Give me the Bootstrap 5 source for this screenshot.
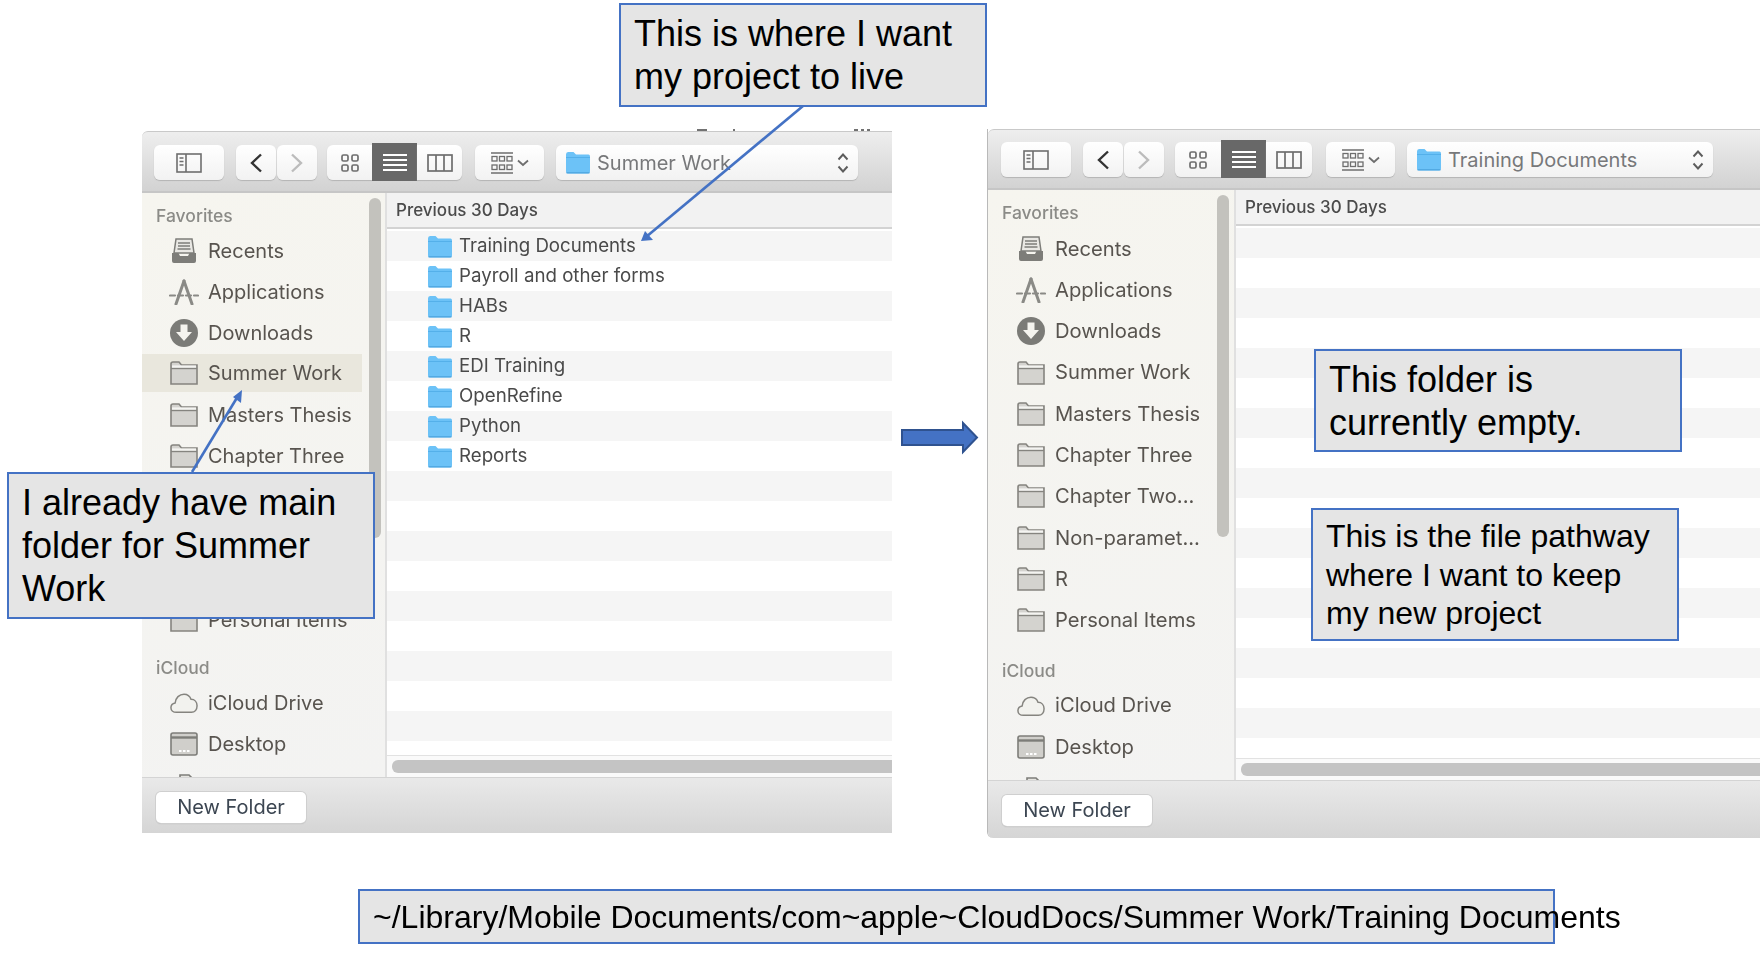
<!DOCTYPE html>
<html lang="en">
<head>
    <meta charset="utf-8">
    <title>Finder project folder notes</title>
    <link href="https://cdn.jsdelivr.net/npm/bootstrap@5.3.0/dist/css/bootstrap.min.css" rel="stylesheet">
    <style>
        html, body { margin: 0; background: #fff; }
        .slide { position: relative; width: 1760px; height: 954px; overflow: hidden; }

        /* finder windows sit freely on the slide */
        .finder { position: absolute; font-family: Inter, "Noto Sans", sans-serif; filter: blur(0.45px); background: #fff; overflow: hidden; }
        .finder-a { left: 142px; top: 131px; width: 750px; height: 702px; --side: 245px; --path: 302px; }
        .finder-b { left: 987px; top: 129px; width: 773px; height: 709px; --side: 248px; --path: 306px; border-left: 1px solid #b9b9b9; border-bottom-left-radius: 6px; }

        .tool-strip { height: 62px; flex: none; padding: 2px 0 0 12px; background: linear-gradient(#eeeeee, #d2d2d2); border-top: 1px solid #c9c9c9; border-bottom: 2px solid #c6c6c6; border-top-left-radius: 6px; }
        .finder-b .tool-strip { height: 61px; padding: 1px 0 0 13px; }
        .tb-btn { height: 35px; padding: 0; border: 0; border-radius: 6px; background: linear-gradient(#ffffff, #f2f2f2); box-shadow: 0 1px 1px #b4b4b4; display: flex; align-items: center; justify-content: center; }
        .tb-side { width: 70px; margin-right: 12px; }
        .tb-nav { width: 40px; }
        .tb-next { margin-left: 1px; margin-right: 10px; }
        .finder-b .tb-next { margin-right: 11px; }
        .tb-views { width: 135px; height: 35px; margin-right: 13px; }
        .finder-b .tb-views { width: 137px; margin-right: 14px; }
        .tb-views .tb-btn { border-radius: 0; flex: 1 1 0; }
        .tb-views .tb-btn:first-child { border-radius: 6px 0 0 6px; }
        .tb-views .tb-btn:last-child { border-radius: 0 6px 6px 0; }
        .tb-views .tb-btn.is-on { background: #686868; height: 38px; margin-top: -2px; box-shadow: none; }
        .tb-group { width: 69px; margin-right: 12px; gap: 4px; }
        .tb-path { width: var(--path); justify-content: flex-start; padding: 0 9px; gap: 6px; font-size: 20px; color: #77787a; }
        .tb-path .path-arrows { margin-left: auto; margin-right: 0; }

        .side-pane { width: var(--side); flex: none; padding-top: 11px; background: linear-gradient(160deg, #f6f5ef, #f3f3f2); border-right: 2px solid #e0e0e0; position: relative; overflow: hidden; }
        .finder-b .side-pane { padding-top: 12px; }
        .side-label { height: 26px; padding-left: 14px; font-size: 17.5px; font-weight: 500; line-height: 24px; color: #8b8b87; }
        .finder-b .side-label { line-height: 22px; }
        .side-label.next-block { margin-top: 16px; }
        .finder-b .side-label.next-block { margin-top: 17px; height: 27px; line-height: 25px; }
        .side-row { height: 41px; padding-left: 28px; gap: 10px; font-size: 20px; color: #58544f; white-space: nowrap; width: 220px; }
        .finder-b .side-row { height: 41.3px; padding-left: 29px; font-size: 20.2px; }
        .side-row.is-here { background: #e9e7dd; height: 38px; margin: 1px 0 2px; }
        .side-thumb { position: absolute; right: 4px; top: 5px; width: 12px; height: 340px; border-radius: 6px; background: #c3c2bd; }
        .finder-b .side-thumb { right: 5px; height: 342px; }
        .ico-wide { margin: 0 -1px; }

        .list-pane { min-width: 0; }
        .list-head { height: 36px; flex: none; padding-left: 9px; background: #f2f2f2; border-bottom: 2px solid #d3d3d3; font-size: 17px; font-weight: 500; line-height: 34px; color: #4b4b4b; }
        .list-rows { margin-top: 2px; background: repeating-linear-gradient(#f5f5f5 0 30px, #fff 30px 60px); min-height: 0; overflow: hidden; }
        .file-row { height: 30px; padding: 1px 0 0 40px; gap: 6px; font-size: 18.7px; color: #4a4a4a; white-space: nowrap; }
        .h-scroll { height: 22px; flex: none; padding: 4px 0 0 5px; background: #fafafa; border-top: 1px solid #e2e2e2; }
        .h-thumb { height: 13px; border-radius: 6px 0 0 6px; background: #c4c4c4; }

        .foot-strip { height: 56px; flex: none; padding: 4px 0 0 14px; background: linear-gradient(#e9e9e9, #d5d5d5); border-top: 1px solid #d4d4d4; }
        .finder-b .foot-strip { height: 58px; padding-top: 2px; }
        .folder-btn { width: 150px; height: 31px; padding: 0; border: 0; border-radius: 5px; background: #fff; box-shadow: 0 0 0 1px #cfcfcf, 0 1px 1px #aaa; font-size: 20px; line-height: 31px; color: #3c4652; }

        /* powerpoint style notes on top of the screenshots */
        .marks { position: absolute; left: 0; top: 0; }
        .note { position: absolute; background: #e5e5e5; border: 2px solid #4472c4; font-family: "Liberation Sans", Arial, sans-serif; font-size: 36px; line-height: 43px; color: #000; padding: 7px 0 0 13px; }
        .note-project { left: 619px; top: 3px; width: 368px; height: 104px; padding-top: 7px; }
        .note-main { left: 7px; top: 472px; width: 368px; height: 147px; }
        .note-empty { left: 1314px; top: 349px; width: 368px; height: 103px; padding-top: 7px; }
        .note-path { left: 1311px; top: 508px; width: 368px; height: 133px; font-size: 32px; line-height: 38.5px; }
        .note-line { left: 358px; top: 889px; width: 1197px; height: 55px; font-size: 32px; line-height: 52px; padding: 0 0 0 13px; white-space: nowrap; }
    </style>
</head>
<body>

<svg class="d-none">
    <symbol id="i-sidebar" viewBox="0 0 26 20"><rect x="1" y="1" width="24" height="18" fill="none" stroke="#6e6e6e" stroke-width="1.6"/><path d="M10 1v18M3.5 5h4M3.5 8.5h4M3.5 12h4" stroke="#6e6e6e" stroke-width="1.6" fill="none"/></symbol>
    <symbol id="i-back" viewBox="0 0 14 20"><path d="M12 1.5 3 10l9 8.5" fill="none" stroke="currentColor" stroke-width="2.4"/></symbol>
    <symbol id="i-next" viewBox="0 0 14 20"><path d="M2 1.5 11 10l-9 8.5" fill="none" stroke="currentColor" stroke-width="2.4"/></symbol>
    <symbol id="i-icons" viewBox="0 0 18 18"><g fill="none" stroke="#6e6e6e" stroke-width="1.7"><rect x="1" y="1" width="6" height="6" rx="1.5"/><rect x="11" y="1" width="6" height="6" rx="1.5"/><rect x="1" y="11" width="6" height="6" rx="1.5"/><rect x="11" y="11" width="6" height="6" rx="1.5"/></g></symbol>
    <symbol id="i-lines" viewBox="0 0 24 18"><path d="M0 2h24M0 7h24M0 12h24M0 17h24" stroke="#fff" stroke-width="2"/></symbol>
    <symbol id="i-cols" viewBox="0 0 26 18"><rect x="1" y="1" width="24" height="16" fill="none" stroke="#6e6e6e" stroke-width="1.7"/><path d="M9 1v16M17 1v16" stroke="#6e6e6e" stroke-width="1.7"/></symbol>
    <symbol id="i-group" viewBox="0 0 22 22"><path d="M0 1h22M0 21h22" stroke="#6e6e6e" stroke-width="1.7"/><g fill="none" stroke="#6e6e6e" stroke-width="1.3"><rect x="1" y="4.5" width="5" height="4.5"/><rect x="8.5" y="4.5" width="5" height="4.5"/><rect x="16" y="4.5" width="5" height="4.5"/><rect x="1" y="13" width="5" height="4.5"/><rect x="8.5" y="13" width="5" height="4.5"/><rect x="16" y="13" width="5" height="4.5"/></g></symbol>
    <symbol id="i-down" viewBox="0 0 12 8"><path d="M1 1.5 6 6l5-4.500" fill="none" stroke="#6e6e6e" stroke-width="1.8"/></symbol>
    <symbol id="i-updown" viewBox="0 0 12 22"><path d="M1.500 7.500 6 2.500l4.500 5M1.500 14.500 6 19.500l4.500-5" fill="none" stroke="#5c5c5c" stroke-width="1.9"/></symbol>
    <symbol id="i-blue" viewBox="0 0 26 23"><path d="M1 3.500Q1 1 3 1h5.500L11 3.500h12.500Q25 3.500 25 5.500v15q0 2-2 2H3q-2 0-2-2z" fill="#6cc2f7"/><path d="M1 6.500h24" stroke="#54b0ea" stroke-width="1"/><path d="M1.500 21.800h23" stroke="#4ea6df" stroke-width="1.300"/></symbol>
    <symbol id="i-folder" viewBox="0 0 28 24"><path d="M1 3Q1 1 3 1h6l2.500 3H27v19H1z" fill="#d4d3cf" stroke="#85847f" stroke-width="1.600"/><path d="M1 7.500h26" stroke="#85847f" stroke-width="1.400"/><path d="M2 5.500h24" stroke="#f4f4f1" stroke-width="2.200"/></symbol>
    <symbol id="i-recents" viewBox="0 0 26 26"><path d="M5 1h16l2 14H3z" fill="#e9e8e4" stroke="#7d7d79" stroke-width="1.500"/><path d="M7 5h12M7 8h12M6.500 11h13" stroke="#7d7d79" stroke-width="1.400"/><path d="M1 15h6.500l1.500 3h8l1.500-3H25v8q0 2-2 2H3q-2 0-2-2z" fill="#7d7d79"/></symbol>
    <symbol id="i-apps" viewBox="0 0 30 26"><g fill="none" stroke="#8a8a86" stroke-linecap="round"><path d="M15 2 7 25" stroke-width="3"/><path d="M15 2 23 25" stroke-width="3"/><path d="M1 16.500h28" stroke-width="2.200" stroke-dasharray="5 3"/></g></symbol>
    <symbol id="i-dl" viewBox="0 0 28 28"><circle cx="14" cy="14" r="14" fill="#7b7b77"/><path d="M10.500 5.500h7V13H22l-8 9-8-9h4.500z" fill="#f5f4ef"/></symbol>
    <symbol id="i-cloud" viewBox="0 0 30 22"><path d="M7 21C3 21 1 18.500 1 16s2-4.500 4.500-5C6 5.500 10 1.500 15 1.500c4 0 6.500 2.500 7.500 5.500 4 0 6.500 3 6.500 7 0 4-2.500 7-6 7z" fill="#f2f2ee" stroke="#85847f" stroke-width="1.600"/></symbol>
    <symbol id="i-desk" viewBox="0 0 28 24"><rect x="1" y="1" width="26" height="22" rx="2" fill="#d0cfcb" stroke="#7d7d79" stroke-width="1.600"/><path d="M1 5.500h26" stroke="#7d7d79" stroke-width="2.400"/><path d="M9 19h2.500M13 19h2.500M17 19h2.500" stroke="#fff" stroke-width="2"/></symbol>
    <symbol id="i-doc" viewBox="0 0 28 24"><path d="M1 9h9V2h9l5 5v16H1z" fill="#e6e5e1" stroke="#7d7d79" stroke-width="1.600"/></symbol>
</svg>

<div class="slide">

    <!-- left window -->
    <div class="finder finder-a d-flex flex-column">
        <div class="tool-strip d-flex align-items-center">
            <button class="btn tb-btn tb-side"><svg width="26" height="20"><use href="#i-sidebar"/></svg></button>
            <button class="btn tb-btn tb-nav"><svg width="14" height="20" color="#333"><use href="#i-back"/></svg></button>
            <button class="btn tb-btn tb-nav tb-next"><svg width="14" height="20" color="#bcbcbc"><use href="#i-next"/></svg></button>
            <div class="tb-views d-flex">
                <button class="btn tb-btn"><svg width="18" height="18"><use href="#i-icons"/></svg></button>
                <button class="btn tb-btn is-on"><svg width="24" height="18"><use href="#i-lines"/></svg></button>
                <button class="btn tb-btn"><svg width="26" height="18"><use href="#i-cols"/></svg></button>
            </div>
            <button class="btn tb-btn tb-group"><svg width="22" height="22"><use href="#i-group"/></svg><svg width="12" height="8"><use href="#i-down"/></svg></button>
            <button class="btn tb-btn tb-path"><svg width="26" height="23"><use href="#i-blue"/></svg><span>Summer Work</span><svg class="path-arrows" width="12" height="22"><use href="#i-updown"/></svg></button>
        </div>
        <div class="d-flex flex-grow-1" style="min-height:0">
            <div class="side-pane">
                <div class="side-thumb"></div>
                <div class="side-label">Favorites</div>
                <div class="side-row d-flex align-items-center"><svg width="28" height="26"><use href="#i-recents"/></svg>Recents</div>
                <div class="side-row d-flex align-items-center"><svg class="ico-wide" width="30" height="26"><use href="#i-apps"/></svg>Applications</div>
                <div class="side-row d-flex align-items-center"><svg width="28" height="28"><use href="#i-dl"/></svg>Downloads</div>
                <div class="side-row is-here d-flex align-items-center"><svg width="28" height="24"><use href="#i-folder"/></svg>Summer Work</div>
                <div class="side-row d-flex align-items-center"><svg width="28" height="24"><use href="#i-folder"/></svg>Masters Thesis</div>
                <div class="side-row d-flex align-items-center"><svg width="28" height="24"><use href="#i-folder"/></svg>Chapter Three</div>
                <!-- three rows sit behind the note -->
                <div class="side-row"></div>
                <div class="side-row"></div>
                <div class="side-row"></div>
                <div class="side-row d-flex align-items-center"><svg width="28" height="24"><use href="#i-folder"/></svg>Personal Items</div>
                <div class="side-label next-block">iCloud</div>
                <div class="side-row d-flex align-items-center"><svg width="28" height="22"><use href="#i-cloud"/></svg>iCloud Drive</div>
                <div class="side-row d-flex align-items-center"><svg width="28" height="24"><use href="#i-desk"/></svg>Desktop</div>
                <div class="side-row d-flex align-items-center"><svg width="28" height="24"><use href="#i-doc"/></svg></div>
            </div>
            <div class="list-pane d-flex flex-column flex-grow-1">
                <div class="list-head">Previous 30 Days</div>
                <div class="list-rows flex-grow-1">
                    <div class="file-row d-flex align-items-center"><svg width="26" height="23"><use href="#i-blue"/></svg>Training Documents</div>
                    <div class="file-row d-flex align-items-center"><svg width="26" height="23"><use href="#i-blue"/></svg>Payroll and other forms</div>
                    <div class="file-row d-flex align-items-center"><svg width="26" height="23"><use href="#i-blue"/></svg>HABs</div>
                    <div class="file-row d-flex align-items-center"><svg width="26" height="23"><use href="#i-blue"/></svg>R</div>
                    <div class="file-row d-flex align-items-center"><svg width="26" height="23"><use href="#i-blue"/></svg>EDI Training</div>
                    <div class="file-row d-flex align-items-center"><svg width="26" height="23"><use href="#i-blue"/></svg>OpenRefine</div>
                    <div class="file-row d-flex align-items-center"><svg width="26" height="23"><use href="#i-blue"/></svg>Python</div>
                    <div class="file-row d-flex align-items-center"><svg width="26" height="23"><use href="#i-blue"/></svg>Reports</div>
                </div>
                <div class="h-scroll"><div class="h-thumb"></div></div>
            </div>
        </div>
        <div class="foot-strip d-flex align-items-center"><button class="btn folder-btn">New Folder</button></div>
    </div>

    <!-- right window -->
    <div class="finder finder-b d-flex flex-column">
        <div class="tool-strip d-flex align-items-center">
            <button class="btn tb-btn tb-side"><svg width="26" height="20"><use href="#i-sidebar"/></svg></button>
            <button class="btn tb-btn tb-nav"><svg width="14" height="20" color="#333"><use href="#i-back"/></svg></button>
            <button class="btn tb-btn tb-nav tb-next"><svg width="14" height="20" color="#bcbcbc"><use href="#i-next"/></svg></button>
            <div class="tb-views d-flex">
                <button class="btn tb-btn"><svg width="18" height="18"><use href="#i-icons"/></svg></button>
                <button class="btn tb-btn is-on"><svg width="24" height="18"><use href="#i-lines"/></svg></button>
                <button class="btn tb-btn"><svg width="26" height="18"><use href="#i-cols"/></svg></button>
            </div>
            <button class="btn tb-btn tb-group"><svg width="22" height="22"><use href="#i-group"/></svg><svg width="12" height="8"><use href="#i-down"/></svg></button>
            <button class="btn tb-btn tb-path"><svg width="26" height="23"><use href="#i-blue"/></svg><span>Training Documents</span><svg class="path-arrows" width="12" height="22"><use href="#i-updown"/></svg></button>
        </div>
        <div class="d-flex flex-grow-1" style="min-height:0">
            <div class="side-pane">
                <div class="side-thumb"></div>
                <div class="side-label">Favorites</div>
                <div class="side-row d-flex align-items-center"><svg width="28" height="26"><use href="#i-recents"/></svg>Recents</div>
                <div class="side-row d-flex align-items-center"><svg class="ico-wide" width="30" height="26"><use href="#i-apps"/></svg>Applications</div>
                <div class="side-row d-flex align-items-center"><svg width="28" height="28"><use href="#i-dl"/></svg>Downloads</div>
                <div class="side-row d-flex align-items-center"><svg width="28" height="24"><use href="#i-folder"/></svg>Summer Work</div>
                <div class="side-row d-flex align-items-center"><svg width="28" height="24"><use href="#i-folder"/></svg>Masters Thesis</div>
                <div class="side-row d-flex align-items-center"><svg width="28" height="24"><use href="#i-folder"/></svg>Chapter Three</div>
                <div class="side-row d-flex align-items-center"><svg width="28" height="24"><use href="#i-folder"/></svg>Chapter Two...</div>
                <div class="side-row d-flex align-items-center"><svg width="28" height="24"><use href="#i-folder"/></svg>Non-paramet...</div>
                <div class="side-row d-flex align-items-center"><svg width="28" height="24"><use href="#i-folder"/></svg>R</div>
                <div class="side-row d-flex align-items-center"><svg width="28" height="24"><use href="#i-folder"/></svg>Personal Items</div>
                <div class="side-label next-block">iCloud</div>
                <div class="side-row d-flex align-items-center"><svg width="28" height="22"><use href="#i-cloud"/></svg>iCloud Drive</div>
                <div class="side-row d-flex align-items-center"><svg width="28" height="24"><use href="#i-desk"/></svg>Desktop</div>
                <div class="side-row d-flex align-items-center"><svg width="28" height="24"><use href="#i-doc"/></svg></div>
            </div>
            <div class="list-pane d-flex flex-column flex-grow-1">
                <div class="list-head">Previous 30 Days</div>
                <div class="list-rows flex-grow-1"></div>
                <div class="h-scroll"><div class="h-thumb"></div></div>
            </div>
        </div>
        <div class="foot-strip d-flex align-items-center"><button class="btn folder-btn">New Folder</button></div>
    </div>

    <!-- arrows drawn on the slide -->
    <svg class="marks" width="1760" height="954">
        <path d="M697 130h10M733 130h2M854 130h4M861 130h3M867 130h3" stroke="#444" stroke-width="1.500"/>
        <path d="M803 106 646 237" stroke="#4472c4" stroke-width="2.600"/>
        <polygon points="641,241 653,240 645,231" fill="#4472c4"/>
        <path d="M192 472 238 396" stroke="#4472c4" stroke-width="2.600"/>
        <polygon points="242,390 233,397 241,403" fill="#4472c4"/>
        <polygon points="902,430 963,430 963,423 977,437.500 963,452 963,445 902,445" fill="#4472c4" stroke="#2f528f" stroke-width="2"/>
    </svg>

    <div class="note note-project">This is where I want<br>my project to live</div>
    <div class="note note-main">I already have main<br>folder for Summer<br>Work</div>
    <div class="note note-empty">This folder is<br>currently empty.</div>
    <div class="note note-path">This is the file pathway<br>where I want to keep<br>my new project</div>
    <div class="note note-line">~/Library/Mobile Documents/com~apple~CloudDocs/Summer Work/Training Documents</div>
</div>

<script src="https://cdn.jsdelivr.net/npm/bootstrap@5.3.0/dist/js/bootstrap.bundle.min.js"></script>
</body>
</html>
